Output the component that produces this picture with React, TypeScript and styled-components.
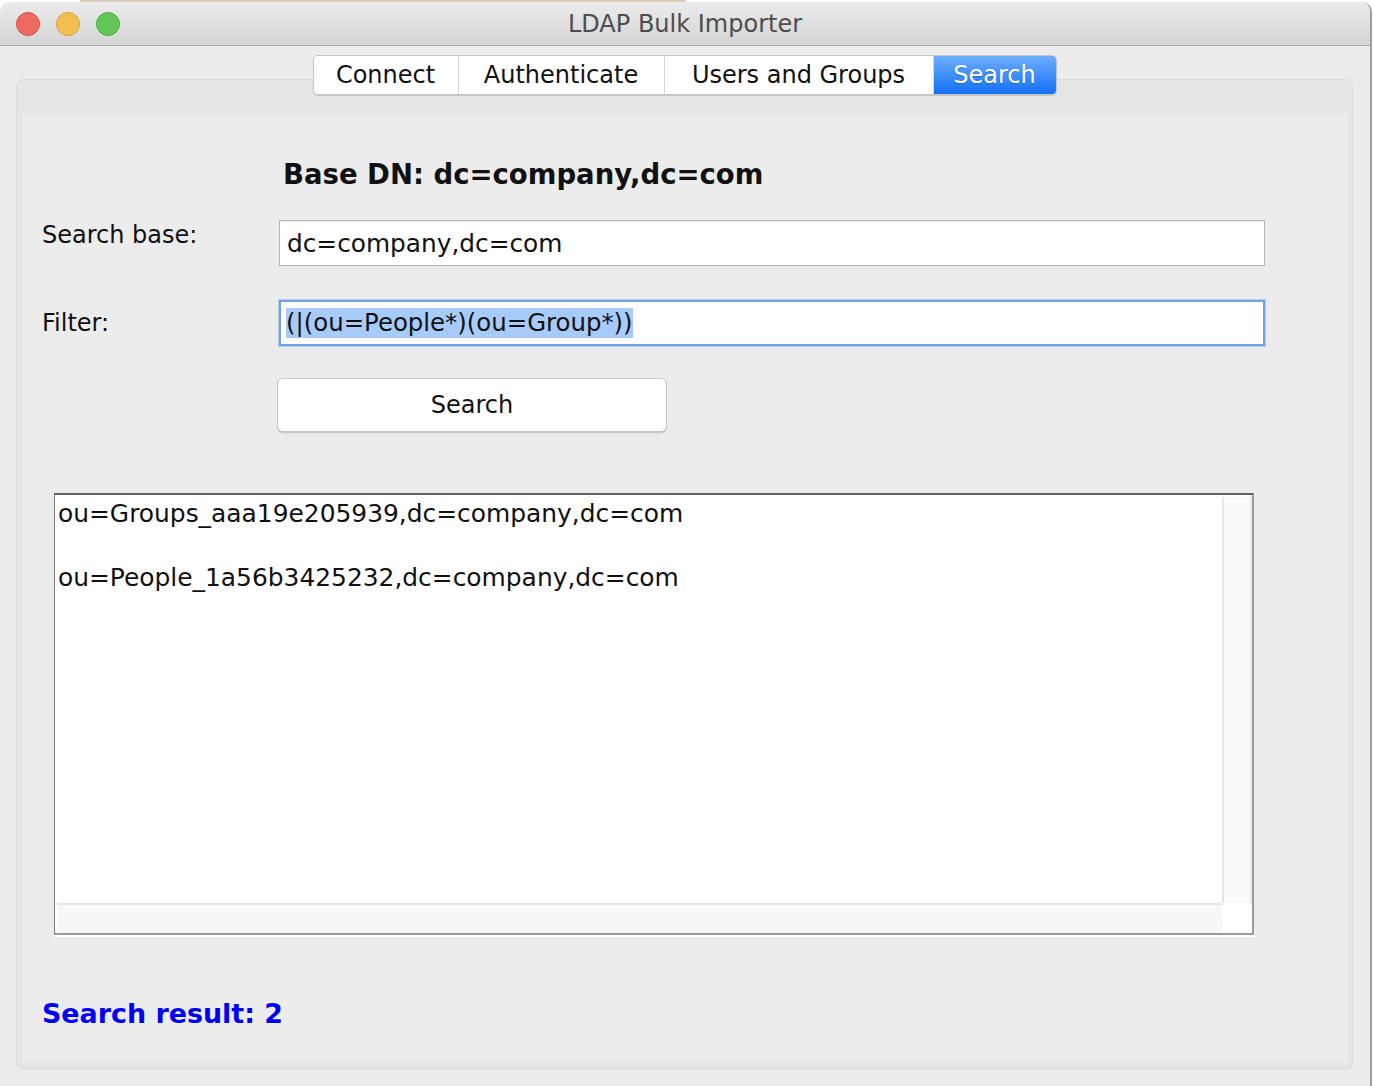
import React from 'react';
import styled, { createGlobalStyle } from 'styled-components';

const GlobalStyle = createGlobalStyle`
  html, body {
    margin: 0;
    padding: 0;
    background: #ffffff;
    overflow: hidden;
  }
  body {
    font-family: "DejaVu Sans", "Liberation Sans", sans-serif;
  }
`;

const Backdrop = styled.div`
  width: 1374px;
  height: 1086px;
  display: flex;
  flex-direction: column;
`;

const DesktopStrip = styled.div`
  height: 2px;
  display: flex;

  span {
    margin-left: 80px;
    width: 606px;
    background: #d9cdb4;
  }
`;

const Window = styled.div`
  width: 1370px;
  flex: 1;
  display: flex;
  flex-direction: column;
  background: #ececec;
  border-right: 2px solid #9d9d9d;
  border-top-left-radius: 10px;
  border-top-right-radius: 10px;
  overflow: hidden;
`;

const TitleBar = styled.div`
  height: 43px;
  flex-shrink: 0;
  display: flex;
  align-items: center;
  position: relative;
  background: linear-gradient(#ececec, #d4d4d4);
  border-bottom: 1px solid #b0b0b0;
  padding-left: 16px;
  gap: 16px;
`;

const Light = styled.div<{ $fill: string; $edge: string }>`
  width: 22px;
  height: 22px;
  border-radius: 50%;
  background: ${p => p.$fill};
  border: 1px solid ${p => p.$edge};
`;

const Title = styled.div`
  position: absolute;
  left: 0;
  right: 0;
  top: 0;
  bottom: 0;
  display: flex;
  align-items: center;
  justify-content: center;
  font-size: 24px;
  color: #4d4d4d;
  pointer-events: none;
`;

const Body = styled.div`
  flex: 1;
  display: flex;
  flex-direction: column;
  padding: 9px 17px 16px 16px;
`;

const TabBar = styled.div`
  align-self: center;
  display: flex;
  height: 38px;
  background: #fff;
  border: 1px solid #c4c4c4;
  border-radius: 5px;
  box-shadow: 0 1px 1px rgba(0, 0, 0, 0.15);
  position: relative;
  z-index: 2;
  overflow: hidden;
`;

const Tab = styled.div<{ $active?: boolean; $w: number }>`
  width: ${p => p.$w}px;
  box-sizing: border-box;
  display: flex;
  align-items: center;
  justify-content: center;
  font-size: 24px;
  color: ${p => (p.$active ? '#fff' : '#111')};
  background: ${p => (p.$active ? 'linear-gradient(#6eadfc, #1470f6)' : '#fff')};
  text-shadow: ${p => (p.$active ? '0 1px 1px rgba(0,0,0,0.25)' : 'none')};
  & + & {
    border-left: 1px solid #d6d6d6;
  }
`;

const Panel = styled.div`
  flex: 1;
  margin-top: -16px;
  display: flex;
  flex-direction: column;
  background: #e5e5e5;
  border: 1px solid #dcdcdc;
  border-radius: 8px;
  padding: 33px 4px 6px 5px;
`;

const Content = styled.div`
  flex: 1;
  background: #ececec;
  display: flex;
  flex-direction: column;
  padding: 44px 0 0 20px;
`;

const Heading = styled.div`
  margin-left: 241px;
  height: 34px;
  line-height: 34px;
  font-size: 27.5px;
  font-weight: bold;
  color: #111;
`;

const FieldRow = styled.div<{ $top: number }>`
  display: flex;
  margin-top: ${p => p.$top}px;
`;

const Label = styled.div<{ $drop: number }>`
  width: 237px;
  font-size: 24px;
  color: #111;
  line-height: 30px;
  padding-top: ${p => p.$drop}px;
`;

const TextField = styled.div<{ $focused?: boolean }>`
  width: 986px;
  height: 46px;
  box-sizing: border-box;
  background: #fff;
  display: flex;
  align-items: center;
  font-size: ${p => (p.$focused ? '24.4px' : '24.8px')};
  color: #111;
  border: ${p => (p.$focused ? '2px solid #70a2e8' : '1px solid #b4b4b4')};
  box-shadow: ${p => (p.$focused ? '0 0 0 1px rgba(120,170,235,0.45)' : 'inset 0 1px 1px rgba(0,0,0,0.08)')};
  padding-left: ${p => (p.$focused ? '5px' : '7px')};
`;

const Selected = styled.span`
  background: #a7cbfb;
  line-height: 30px;
`;

const Button = styled.div`
  margin: 32px 0 0 235px;
  width: 388px;
  height: 52px;
  background: #fff;
  border: 1px solid #c6c6c6;
  border-radius: 6px;
  box-shadow: 0 1px 1px rgba(0, 0, 0, 0.18);
  display: flex;
  align-items: center;
  justify-content: center;
  font-size: 24px;
  color: #111;
`;

const ListFrame = styled.div`
  margin: 61px 0 0 12px;
  width: 1200px;
  height: 442px;
  box-sizing: border-box;
  border-top: 2px solid #626262;
  border-left: 1px solid #7a7a7a;
  border-right: 2px solid #9a9a9a;
  border-bottom: 2px solid #9a9a9a;
  box-shadow: 0 2px 0 #fff;
  background: #fff;
  display: grid;
  grid-template-columns: 1fr 30px;
  grid-template-rows: 1fr 30px;
`;

const ListText = styled.div`
  padding: 3px 0 0 3px;
  font-size: 24.9px;
  line-height: 32px;
  color: #111;
  white-space: pre;
`;

const VScroll = styled.div`
  background: #f9f9f9;
  border-left: 2px solid #e6e6e6;
  border-right: 2px solid #ececec;
  margin-top: 2px;
`;

const HScroll = styled.div`
  background: linear-gradient(#f9f9f9, #f6f6f6);
  border-top: 2px solid #e6e6e6;
  margin-left: 2px;
`;

const Corner = styled.div`
  background: #fff;
`;

const Result = styled.div`
  margin-top: 62px;
  height: 34px;
  line-height: 34px;
  font-size: 26.9px;
  font-weight: bold;
  color: #0000f8;
`;

const tabs = [
  { label: 'Connect', width: 144 },
  { label: 'Authenticate', width: 206 },
  { label: 'Users and Groups', width: 269 },
  { label: 'Search', width: 123 },
];

const results = [
  'ou=Groups_aaa19e205939,dc=company,dc=com',
  'ou=People_1a56b3425232,dc=company,dc=com',
];

export default function App() {
  return (
    <Backdrop>
      <GlobalStyle />
      <DesktopStrip>
        <span />
      </DesktopStrip>
      <Window>
        <TitleBar>
          <Light $fill="#ee6a5e" $edge="#d5544a" />
          <Light $fill="#f6be4f" $edge="#d9a13b" />
          <Light $fill="#62c654" $edge="#4fa93f" />
          <Title>LDAP Bulk Importer</Title>
        </TitleBar>
        <Body>
          <TabBar>
            {tabs.map(t => (
              <Tab key={t.label} $w={t.width} $active={t.label === 'Search'}>
                {t.label}
              </Tab>
            ))}
          </TabBar>
          <Panel>
            <Content>
              <Heading>Base DN: dc=company,dc=com</Heading>
              <FieldRow $top={29}>
                <Label $drop={0}>Search base:</Label>
                <TextField>dc=company,dc=com</TextField>
              </FieldRow>
              <FieldRow $top={34}>
                <Label $drop={8}>Filter:</Label>
                <TextField $focused>
                  <Selected>(|(ou=People*)(ou=Group*))</Selected>
                </TextField>
              </FieldRow>
              <Button>Search</Button>
              <ListFrame>
                <ListText>{results.join('\n\n')}</ListText>
                <VScroll />
                <HScroll />
                <Corner />
              </ListFrame>
              <Result>Search result: 2</Result>
            </Content>
          </Panel>
        </Body>
      </Window>
    </Backdrop>
  );
}
